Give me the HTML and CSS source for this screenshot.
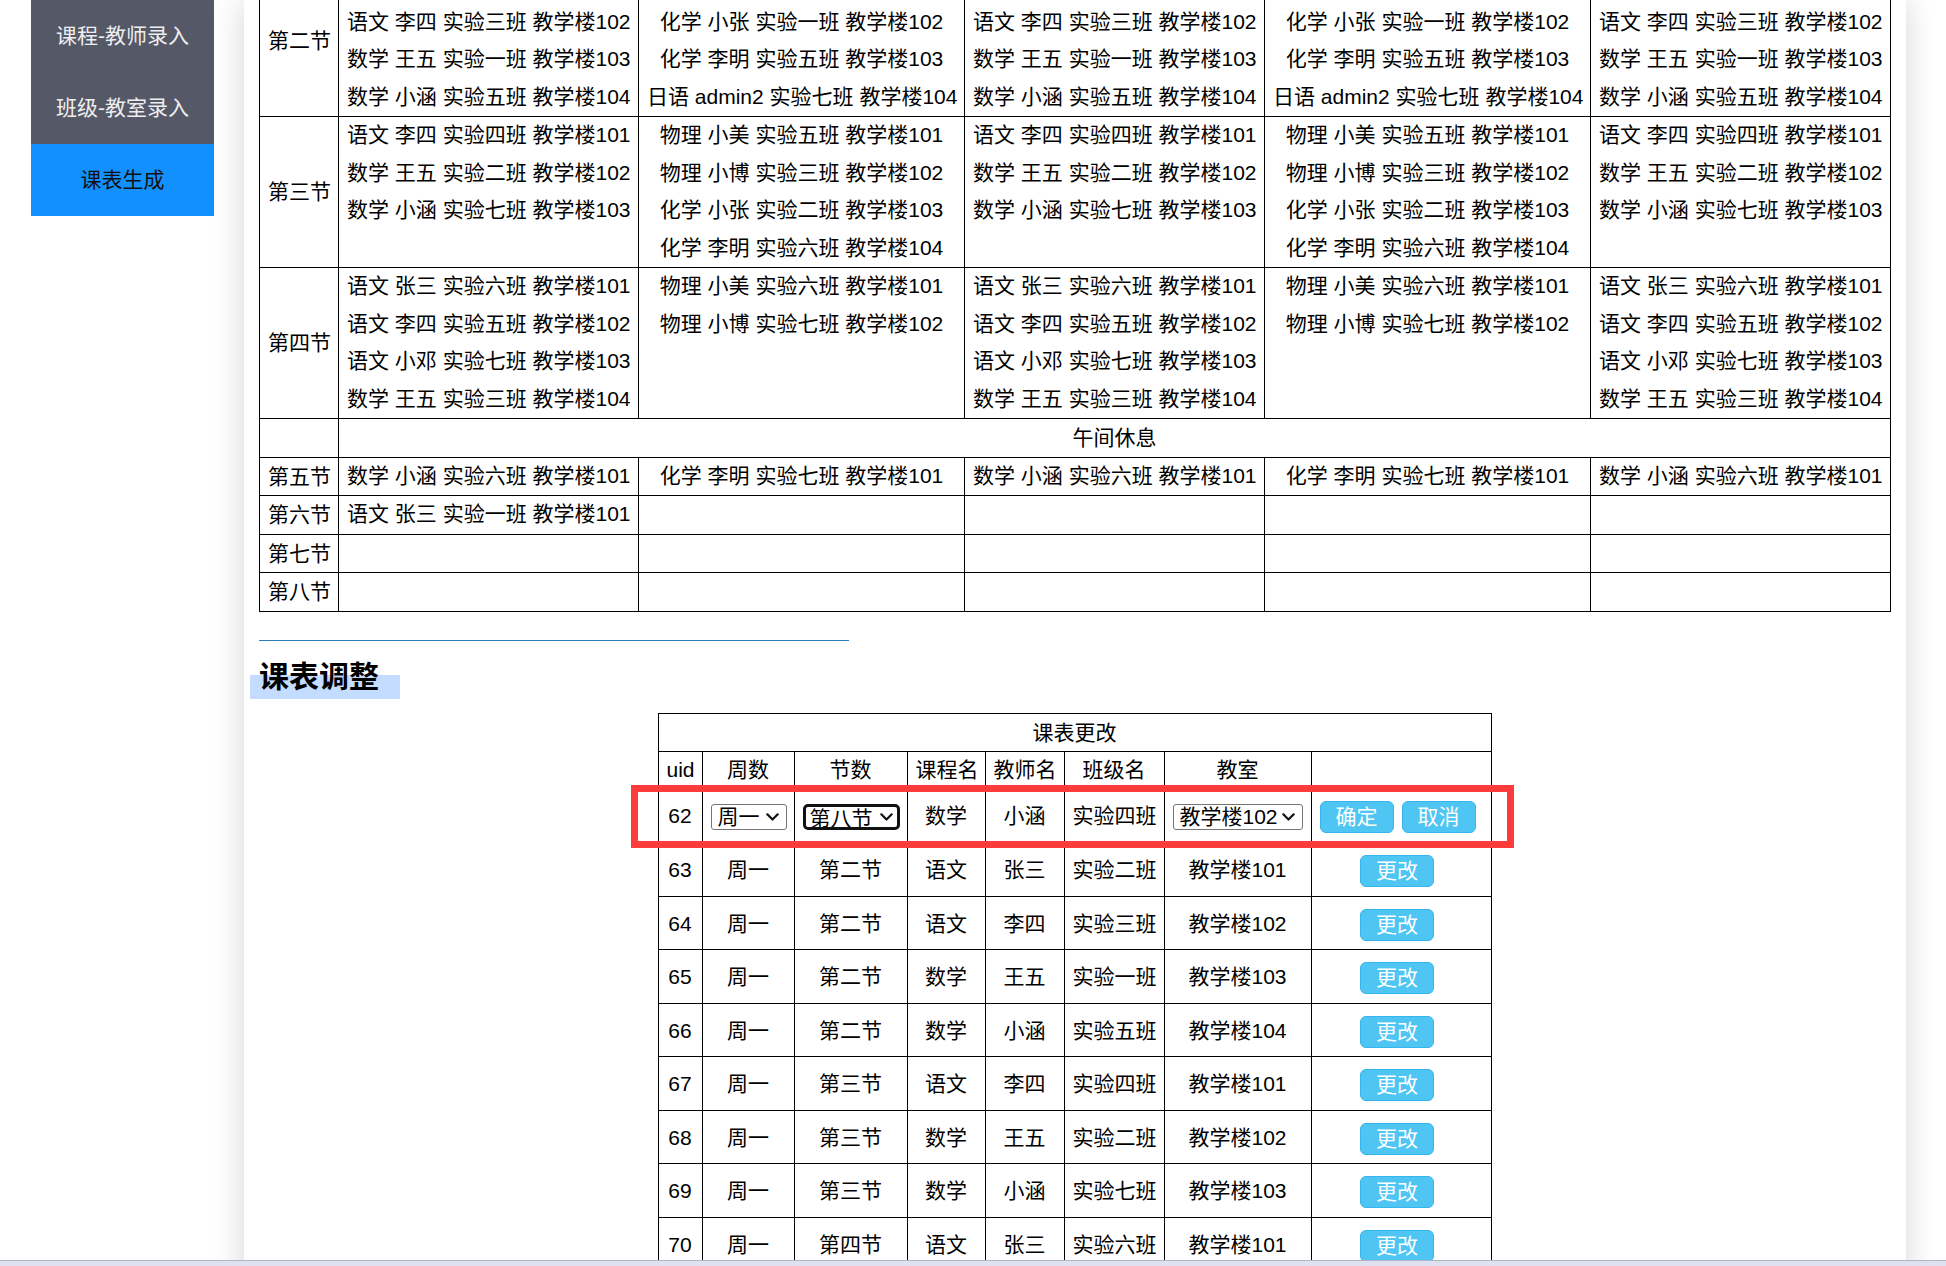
FILE: index.html
```html
<!DOCTYPE html>
<html lang="zh-CN">
<head>
<meta charset="utf-8">
<title>课表生成</title>
<link rel="stylesheet" href="styles.css">
</head>
<body>
<div class="app">
  <nav class="side">
    <a class="item">课程-教师录入</a>
    <a class="item">班级-教室录入</a>
    <a class="item active">课表生成</a>
  </nav>
  <main class="panel">
    <table class="tt">
      <colgroup>
        <col class="c-lbl"><col class="c-n"><col class="c-w"><col class="c-n"><col class="c-w"><col class="c-n">
      </colgroup>
      <tr>
        <th class="lbl"></th><th>周一</th><th>周二</th><th>周三</th><th>周四</th><th>周五</th>
      </tr>
      <tr>
        <td class="lbl">第一节</td>
        <td><div>语文 张三 实验一班 教学楼101</div><div>语文 李四 实验二班 教学楼102</div><div>数学 王五 实验四班 教学楼103</div><div>数学 小涵 实验三班 教学楼104</div></td>
        <td><div>化学 小张 实验三班 教学楼101</div><div>化学 李明 实验四班 教学楼102</div><div>物理 小美 实验一班 教学楼103</div><div>物理 小博 实验二班 教学楼104</div></td>
        <td><div>语文 张三 实验一班 教学楼101</div><div>语文 李四 实验二班 教学楼102</div><div>数学 王五 实验四班 教学楼103</div><div>数学 小涵 实验三班 教学楼104</div></td>
        <td><div>化学 小张 实验三班 教学楼101</div><div>化学 李明 实验四班 教学楼102</div><div>物理 小美 实验一班 教学楼103</div><div>物理 小博 实验二班 教学楼104</div></td>
        <td><div>语文 张三 实验一班 教学楼101</div><div>语文 李四 实验二班 教学楼102</div><div>数学 王五 实验四班 教学楼103</div><div>数学 小涵 实验三班 教学楼104</div></td>
      </tr>
      <tr>
        <td class="lbl">第二节</td>
        <td><div>语文 张三 实验二班 教学楼101</div><div>语文 李四 实验三班 教学楼102</div><div>数学 王五 实验一班 教学楼103</div><div>数学 小涵 实验五班 教学楼104</div></td>
        <td><div>物理 小美 实验四班 教学楼101</div><div>化学 小张 实验一班 教学楼102</div><div>化学 李明 实验五班 教学楼103</div><div>日语 admin2 实验七班 教学楼104</div></td>
        <td><div>语文 张三 实验二班 教学楼101</div><div>语文 李四 实验三班 教学楼102</div><div>数学 王五 实验一班 教学楼103</div><div>数学 小涵 实验五班 教学楼104</div></td>
        <td><div>物理 小美 实验四班 教学楼101</div><div>化学 小张 实验一班 教学楼102</div><div>化学 李明 实验五班 教学楼103</div><div>日语 admin2 实验七班 教学楼104</div></td>
        <td><div>语文 张三 实验二班 教学楼101</div><div>语文 李四 实验三班 教学楼102</div><div>数学 王五 实验一班 教学楼103</div><div>数学 小涵 实验五班 教学楼104</div></td>
      </tr>
      <tr>
        <td class="lbl">第三节</td>
        <td><div>语文 李四 实验四班 教学楼101</div><div>数学 王五 实验二班 教学楼102</div><div>数学 小涵 实验七班 教学楼103</div></td>
        <td><div>物理 小美 实验五班 教学楼101</div><div>物理 小博 实验三班 教学楼102</div><div>化学 小张 实验二班 教学楼103</div><div>化学 李明 实验六班 教学楼104</div></td>
        <td><div>语文 李四 实验四班 教学楼101</div><div>数学 王五 实验二班 教学楼102</div><div>数学 小涵 实验七班 教学楼103</div></td>
        <td><div>物理 小美 实验五班 教学楼101</div><div>物理 小博 实验三班 教学楼102</div><div>化学 小张 实验二班 教学楼103</div><div>化学 李明 实验六班 教学楼104</div></td>
        <td><div>语文 李四 实验四班 教学楼101</div><div>数学 王五 实验二班 教学楼102</div><div>数学 小涵 实验七班 教学楼103</div></td>
      </tr>
      <tr>
        <td class="lbl">第四节</td>
        <td><div>语文 张三 实验六班 教学楼101</div><div>语文 李四 实验五班 教学楼102</div><div>语文 小邓 实验七班 教学楼103</div><div>数学 王五 实验三班 教学楼104</div></td>
        <td><div>物理 小美 实验六班 教学楼101</div><div>物理 小博 实验七班 教学楼102</div></td>
        <td><div>语文 张三 实验六班 教学楼101</div><div>语文 李四 实验五班 教学楼102</div><div>语文 小邓 实验七班 教学楼103</div><div>数学 王五 实验三班 教学楼104</div></td>
        <td><div>物理 小美 实验六班 教学楼101</div><div>物理 小博 实验七班 教学楼102</div></td>
        <td><div>语文 张三 实验六班 教学楼101</div><div>语文 李四 实验五班 教学楼102</div><div>语文 小邓 实验七班 教学楼103</div><div>数学 王五 实验三班 教学楼104</div></td>
      </tr>
      <tr>
        <td class="lbl"></td>
        <td class="mid" colspan="5">午间休息</td>
      </tr>
      <tr>
        <td class="lbl">第五节</td>
        <td><div>数学 小涵 实验六班 教学楼101</div></td>
        <td><div>化学 李明 实验七班 教学楼101</div></td>
        <td><div>数学 小涵 实验六班 教学楼101</div></td>
        <td><div>化学 李明 实验七班 教学楼101</div></td>
        <td><div>数学 小涵 实验六班 教学楼101</div></td>
      </tr>
      <tr>
        <td class="lbl">第六节</td>
        <td><div>语文 张三 实验一班 教学楼101</div></td>
        <td></td><td></td><td></td><td></td>
      </tr>
      <tr>
        <td class="lbl">第七节</td>
        <td></td><td></td><td></td><td></td><td></td>
      </tr>
      <tr>
        <td class="lbl">第八节</td>
        <td></td><td></td><td></td><td></td><td></td>
      </tr>
    </table>

    <hr class="rule">

    <h2 class="title">课表调整</h2>

    <div class="edit-wrap">
      <table class="edit">
        <colgroup>
          <col class="e-uid"><col class="e-day"><col class="e-sec"><col class="e-course"><col class="e-teacher"><col class="e-class"><col class="e-room"><col class="e-op">
        </colgroup>
        <tr class="cap"><th colspan="8">课表更改</th></tr>
        <tr class="hd">
          <th>uid</th><th>周数</th><th>节数</th><th>课程名</th><th>教师名</th><th>班级名</th><th>教室</th><th></th>
        </tr>
        <tr class="editing">
          <td>62</td>
          <td><span class="selbox sb-day"><select class="sel"><option selected>周一</option><option>周二</option><option>周三</option><option>周四</option><option>周五</option></select><svg class="chev" viewBox="0 0 13 8"><path d="M1.3 1.3 L6.5 6.5 L11.7 1.3" fill="none" stroke="#111" stroke-width="2.2" stroke-linecap="round" stroke-linejoin="round"/></svg></span></td>
          <td><span class="selbox sb-sec focus"><select class="sel"><option>第一节</option><option>第二节</option><option>第三节</option><option>第四节</option><option>第五节</option><option>第六节</option><option>第七节</option><option selected>第八节</option></select><svg class="chev" viewBox="0 0 13 8"><path d="M1.3 1.3 L6.5 6.5 L11.7 1.3" fill="none" stroke="#111" stroke-width="2.2" stroke-linecap="round" stroke-linejoin="round"/></svg></span></td>
          <td>数学</td>
          <td>小涵</td>
          <td>实验四班</td>
          <td><span class="selbox sb-room"><select class="sel"><option>教学楼101</option><option selected>教学楼102</option><option>教学楼103</option><option>教学楼104</option></select><svg class="chev" viewBox="0 0 13 8"><path d="M1.3 1.3 L6.5 6.5 L11.7 1.3" fill="none" stroke="#111" stroke-width="2.2" stroke-linecap="round" stroke-linejoin="round"/></svg></span></td>
          <td><button class="btn">确定</button><button class="btn">取消</button></td>
        </tr>
        <tr><td>63</td><td>周一</td><td>第二节</td><td>语文</td><td>张三</td><td>实验二班</td><td>教学楼101</td><td><button class="btn">更改</button></td></tr>
        <tr><td>64</td><td>周一</td><td>第二节</td><td>语文</td><td>李四</td><td>实验三班</td><td>教学楼102</td><td><button class="btn">更改</button></td></tr>
        <tr><td>65</td><td>周一</td><td>第二节</td><td>数学</td><td>王五</td><td>实验一班</td><td>教学楼103</td><td><button class="btn">更改</button></td></tr>
        <tr><td>66</td><td>周一</td><td>第二节</td><td>数学</td><td>小涵</td><td>实验五班</td><td>教学楼104</td><td><button class="btn">更改</button></td></tr>
        <tr><td>67</td><td>周一</td><td>第三节</td><td>语文</td><td>李四</td><td>实验四班</td><td>教学楼101</td><td><button class="btn">更改</button></td></tr>
        <tr><td>68</td><td>周一</td><td>第三节</td><td>数学</td><td>王五</td><td>实验二班</td><td>教学楼102</td><td><button class="btn">更改</button></td></tr>
        <tr><td>69</td><td>周一</td><td>第三节</td><td>数学</td><td>小涵</td><td>实验七班</td><td>教学楼103</td><td><button class="btn">更改</button></td></tr>
        <tr><td>70</td><td>周一</td><td>第四节</td><td>语文</td><td>张三</td><td>实验六班</td><td>教学楼101</td><td><button class="btn">更改</button></td></tr>
        <tr><td>71</td><td>周一</td><td>第四节</td><td>语文</td><td>李四</td><td>实验五班</td><td>教学楼102</td><td><button class="btn">更改</button></td></tr>
      </table>
      <div class="annot"></div>
    </div>
  </main>
</div>
<div class="hbar"></div>
</body>
</html>
```
FILE: styles.css
```css
html, body {
  margin: 0;
  height: 100%;
  overflow: hidden;
  background: #fff;
}
body {
  font-family: "Liberation Sans", "Noto Sans CJK SC", sans-serif;
  font-size: 21px;
  color: #000;
}
.app {
  display: flex;
  align-items: flex-start;
  min-height: 100vh;
}
.side {
  flex: none;
  width: 183px;
  margin-left: 31px;
  display: flex;
  flex-direction: column;
}
.item {
  display: block;
  height: 72px;
  line-height: 72px;
  text-align: center;
  background: #555867;
  color: #eeeeee;
  font-size: 21px;
}
.item.active {
  background: #1190fe;
  color: #111;
}
.panel {
  flex: none;
  box-sizing: border-box;
  width: 1662px;
  min-height: 100vh;
  margin-left: 30px;
  padding: 0 16px 40px 15px;
  background: #fff;
  box-shadow: 0 0 30px rgba(0, 0, 0, 0.17);
}

/* timetable */
.tt {
  border-collapse: collapse;
  table-layout: fixed;
  width: 1632px;
  margin-top: -224.5px;
}
.tt .c-lbl { width: 79px; }
.tt .c-n { width: 300px; }
.tt .c-w { width: 326px; }
.tt th, .tt td {
  border: 1px solid #000;
  padding: 0 8px;
  line-height: 37.5px;
  text-align: center;
  vertical-align: top;
  white-space: nowrap;
  font-weight: normal;
}
.tt td div {
  line-height: 36px;
  padding-bottom: 1.5px;
}
.tt .lbl, .tt .mid {
  vertical-align: middle;
}

.rule {
  width: 590px;
  height: 0;
  margin: 28px 0 0 0;
  border: 0;
  border-top: 1px solid #2b7cb9;
}

.title {
  position: relative;
  z-index: 0;
  margin: 13px 0 19px 0;
  font-family: "Noto Sans CJK SC", sans-serif;
  font-size: 30px;
  font-weight: 700;
  line-height: 40px;
  color: #000;
}
.title::before {
  content: "";
  position: absolute;
  z-index: -1;
  left: -9px;
  top: 21px;
  width: 150px;
  height: 24px;
  background: #c3dcff;
}

/* edit table */
.edit-wrap {
  position: relative;
  width: 834px;
  margin: 0 auto;
}
.edit {
  border-collapse: collapse;
  table-layout: fixed;
  width: 834px;
}
.edit .e-uid { width: 44px; }
.edit .e-day { width: 92px; }
.edit .e-sec { width: 113px; }
.edit .e-course { width: 78px; }
.edit .e-teacher { width: 79px; }
.edit .e-class { width: 100px; }
.edit .e-room { width: 147px; }
.edit .e-op { width: 180px; }
.edit th, .edit td {
  border: 1px solid #000;
  padding: 8px 8px 7px;
  line-height: 37.5px;
  text-align: center;
  vertical-align: middle;
  white-space: nowrap;
  font-weight: normal;
}
.edit .cap th {
  padding: 0 8px;
}
.edit .hd th {
  padding: 0 8px;
  line-height: 36px;
}
.edit .editing td {
  padding: 8px 8px 7.5px;
}

.selbox {
  position: relative;
  display: inline-block;
  box-sizing: border-box;
  height: 26px;
  vertical-align: middle;
}
.sb-day { width: 76px; }
.sb-sec { width: 97px; }
.sb-room { width: 130px; }
.sel {
  -webkit-appearance: none;
  appearance: none;
  display: block;
  box-sizing: border-box;
  width: 100%;
  height: 26px;
  margin: 0;
  padding: 0 20px 0 6px;
  border: 1px solid #767676;
  border-radius: 3px;
  background: #fff;
  color: #000;
  font-family: "Liberation Sans", "Noto Sans CJK SC", sans-serif;
  font-size: 21px;
  line-height: 24px;
  outline: none;
}
.focus .sel {
  border: 3px solid #111;
  border-radius: 5px;
  padding-left: 4px;
}
.chev {
  position: absolute;
  right: 8px;
  top: 9px;
  width: 13px;
  height: 8px;
  pointer-events: none;
}
.focus .chev {
  right: 7px;
}

.btn {
  box-sizing: border-box;
  display: inline-block;
  width: 74px;
  height: 32px;
  margin: 0 8px 0 0;
  padding: 0;
  border: 1px solid #36b4ec;
  border-radius: 6px;
  background: #4ec5f3;
  color: #fff;
  font-family: "Liberation Sans", "Noto Sans CJK SC", sans-serif;
  font-size: 21px;
  line-height: 30px;
  vertical-align: middle;
}

/* annotation overlay */
.annot {
  position: absolute;
  left: -27px;
  top: 72px;
  width: 883px;
  height: 63px;
  box-sizing: border-box;
  border: 7px solid #fe3b3b;
  pointer-events: none;
}

.hbar {
  position: fixed;
  left: 0;
  right: 0;
  bottom: 0;
  height: 5px;
  background: #dfe0f0;
  border-top: 1px solid #b3b3c6;
}
```
